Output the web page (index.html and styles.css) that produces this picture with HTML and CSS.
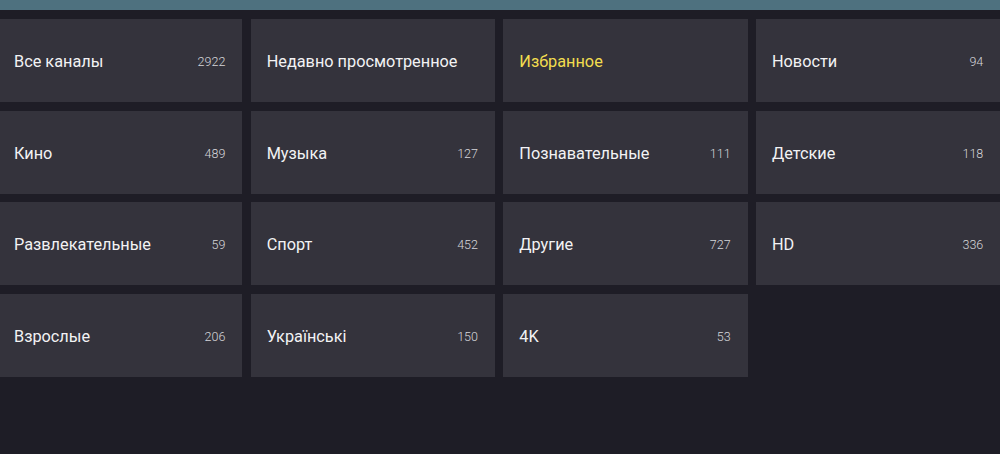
FILE: index.html
```html
<!DOCTYPE html>
<html lang="ru">
<head>
<meta charset="utf-8">
<link rel="stylesheet" href="styles.css">
</head>
<body>
<div class="topbar"></div>
<div class="grid">
  <div class="card"><span class="name">Все каналы</span><span class="count">2922</span></div>
  <div class="card"><span class="name">Недавно просмотренное</span><span class="count"></span></div>
  <div class="card active"><span class="name">Избранное</span><span class="count"></span></div>
  <div class="card"><span class="name">Новости</span><span class="count">94</span></div>
  <div class="card"><span class="name">Кино</span><span class="count">489</span></div>
  <div class="card"><span class="name">Музыка</span><span class="count">127</span></div>
  <div class="card"><span class="name">Познавательные</span><span class="count">111</span></div>
  <div class="card"><span class="name">Детские</span><span class="count">118</span></div>
  <div class="card"><span class="name">Развлекательные</span><span class="count">59</span></div>
  <div class="card"><span class="name">Спорт</span><span class="count">452</span></div>
  <div class="card"><span class="name">Другие</span><span class="count">727</span></div>
  <div class="card"><span class="name">HD</span><span class="count">336</span></div>
  <div class="card"><span class="name">Взрослые</span><span class="count">206</span></div>
  <div class="card"><span class="name">Українські</span><span class="count">150</span></div>
  <div class="card"><span class="name">4K</span><span class="count">53</span></div>
</div>
</body>
</html>
```
FILE: styles.css
```css
html, body {
  margin: 0;
  padding: 0;
  background: #1e1d26;
  height: 100%;
  overflow: hidden;
}
body {
  font-family: Roboto, "Noto Sans", sans-serif;
  color: #f2f2f4;
}
.topbar {
  height: 10px;
  background: #4e717f;
}
.grid {
  display: grid;
  grid-template-columns: repeat(4, 244.33px);
  grid-auto-rows: 83px;
  column-gap: 8.33px;
  row-gap: 8.67px;
  margin: 9px 0 0 -2px;
}
.card {
  background: #34333c;
  display: flex;
  align-items: center;
  justify-content: space-between;
  padding: 2px 17px 0 16px;
}
.name {
  font-size: 16.3px;
  font-weight: 400;
}
.active .name {
  color: #f2dd4f;
}
.count {
  font-size: 12.5px;
  font-weight: 300;
  color: #d6d6da;
}
```
